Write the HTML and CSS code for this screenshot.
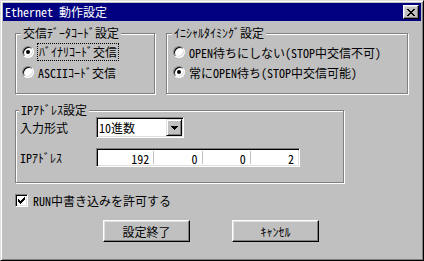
FILE: index.html
```html
<!DOCTYPE html>
<html lang="ja">
<head>
<meta charset="UTF-8" />
<title>Ethernet 動作設定</title>
<link rel="stylesheet" href="styles.css">
</head>
<body>

<div class="window">
  <div class="titlebar">
    <span class="title">Ethernet 動作設定</span>
    <span class="close">
      <svg width="8" height="7" viewBox="0 0 8 7" shape-rendering="crispEdges">
        <path d="M0 0h2v1h-2zM6 0h2v1h-2zM1 1h2v1h-2zM5 1h2v1h-2zM2 2h4v1h-4zM3 3h2v1h-2zM2 4h4v1h-4zM1 5h2v1h-2zM5 5h2v1h-2zM0 6h2v1h-2zM6 6h2v1h-2z" fill="#000"/>
      </svg>
    </span>
  </div>

  <div class="content">
    <div class="group-row">
      <fieldset class="group group-code">
        <legend>交信ﾃﾞｰﾀｺｰﾄﾞ設定</legend>
        <div class="radio-row"><span class="radio checked"></span><span class="focus">ﾊﾞｲﾅﾘｺｰﾄﾞ交信</span></div>
        <div class="radio-row"><span class="radio"></span><span class="text">ASCIIｺｰﾄﾞ交信</span></div>
      </fieldset>
      <fieldset class="group group-timing">
        <legend>ｲﾆｼｬﾙﾀｲﾐﾝｸﾞ設定</legend>
        <div class="radio-row"><span class="radio"></span><span class="text">OPEN待ちにしない(STOP中交信不可)</span></div>
        <div class="radio-row"><span class="radio checked"></span><span class="text">常にOPEN待ち(STOP中交信可能)</span></div>
      </fieldset>
    </div>

    <fieldset class="group group-ip">
      <legend>IPｱﾄﾞﾚｽ設定</legend>
      <div class="field-row">
        <span class="field-label">入力形式</span>
        <div class="combo">
          <span class="combo-value">10進数</span>
          <span class="combo-btn">
            <svg width="7" height="4" viewBox="0 0 7 4" shape-rendering="crispEdges"><path d="M0 0h7v1h-7zM1 1h5v1h-5zM2 2h3v1h-3zM3 3h1v1h-1z" fill="#000"/></svg>
          </span>
        </div>
      </div>
      <div class="field-row ip-row">
        <span class="field-label">IPｱﾄﾞﾚｽ</span>
        <div class="ip-box">
          <span class="ip-seg">192</span>
          <span class="ip-seg">0</span>
          <span class="ip-seg">0</span>
          <span class="ip-seg">2</span>
        </div>
      </div>
    </fieldset>

    <div class="check-row">
      <span class="checkbox">
        <svg width="7" height="7" viewBox="0 0 7 7" shape-rendering="crispEdges"><path d="M6 0h1v3h-1zM5 1h1v3h-1zM0 2h1v3h-1zM4 2h1v3h-1zM1 3h1v3h-1zM3 3h1v3h-1zM2 4h1v3h-1z" fill="#000"/></svg>
      </span>
      <span class="text">RUN中書き込みを許可する</span>
    </div>

    <div class="buttons">
      <span class="btn">設定終了</span>
      <span class="btn">ｷｬﾝｾﾙ</span>
    </div>
  </div>
</div>

</body>
</html>
```

FILE: styles.css
```css
html, body {
  margin: 0;
  padding: 0;
}
body {
  width: 424px;
  height: 261px;
  background: #c0c0c0;
  font-family: "Noto Sans CJK JP", "Liberation Sans", sans-serif;
  font-size: 12px;
  /* half-width latin, like the old bitmap gothic */
  font-feature-settings: "hwid" 1;
  font-kerning: none;
  color: #000;
}
.window {
  box-sizing: border-box;
  width: 424px;
  height: 261px;
  padding: 2px;
  background: #c0c0c0;
  border: 1px solid;
  border-color: #dfdfdf #000 #000 #dfdfdf;
  box-shadow: inset 1px 1px 0 #fff, inset -1px -1px 0 #808080;
}

/* title bar */
.titlebar {
  display: flex;
  align-items: center;
  height: 18px;
  padding-left: 2px;
  background: #000080;
  color: #fff;
}
.title {
  flex: 1;
  line-height: 18px;
}
.close {
  box-sizing: border-box;
  display: flex;
  align-items: center;
  justify-content: center;
  width: 16px;
  height: 14px;
  margin-right: 2px;
  background: #c0c0c0;
  border: 1px solid;
  border-color: #fff #000 #000 #fff;
  box-shadow: inset -1px -1px 0 #808080, inset 1px 1px 0 #dfdfdf;
}

.content {
  padding: 5px 0 0 12px;
}

/* group boxes */
.group-row {
  display: flex;
  gap: 11px;
}
.group {
  box-sizing: border-box;
  margin: 0;
  padding: 2px 0 11px 6px;
  border: 1px solid #808080;
  box-shadow: inset 1px 1px 0 #fff, 1px 1px 0 #fff;
}
.group legend {
  margin-left: -1px;
  padding: 0 2px;
  line-height: 14px;
  background: #c0c0c0;
}
.group-code {
  width: 140px;
}
.group-timing {
  width: 242px;
}
.radio-row {
  display: flex;
  align-items: center;
  height: 20px;
}
.radio {
  box-sizing: border-box;
  position: relative;
  width: 12px;
  height: 12px;
  margin-right: 4px;
  border-radius: 50%;
  background: #fff;
  border: 1px solid;
  border-color: #808080 #fff #fff #808080;
  box-shadow: inset 1px 1px 0 #000, inset -1px -1px 0 #dfdfdf;
}
.radio.checked::after {
  content: "";
  position: absolute;
  left: 3px;
  top: 3px;
  width: 4px;
  height: 4px;
  border-radius: 50%;
  background: #000;
}
.focus {
  padding: 1px 1px;
  line-height: 14px;
  outline: 1px dotted #000;
}

.group-ip {
  width: 329px;
  margin-top: 9px;
  padding: 0 0 15px 4px;
}
.field-row {
  display: flex;
  align-items: center;
}
.ip-row {
  margin-top: 10px;
}
.field-label {
  width: 76px;
}
.combo {
  box-sizing: border-box;
  display: flex;
  align-items: center;
  width: 88px;
  height: 21px;
  background: #fff;
  border: 1px solid;
  border-color: #808080 #fff #fff #808080;
  box-shadow: inset 1px 1px 0 #000, inset -1px -1px 0 #dfdfdf;
}
.combo-value {
  flex: 1;
  padding-left: 2px;
}
.combo-btn {
  box-sizing: border-box;
  display: flex;
  align-items: center;
  justify-content: center;
  width: 16px;
  height: 17px;
  margin-right: 1px;
  background: #c0c0c0;
  border: 1px solid;
  border-color: #dfdfdf #000 #000 #dfdfdf;
  box-shadow: inset 1px 1px 0 #fff, inset -1px -1px 0 #808080;
}
.ip-box {
  box-sizing: border-box;
  display: flex;
  width: 204px;
  height: 19px;
  padding: 2px 1px 2px 9px;
  background: #fff;
  border: 1px solid;
  border-color: #808080 #fff #fff #808080;
  box-shadow: inset 1px 1px 0 #000, inset -1px -1px 0 #dfdfdf;
}
.ip-seg {
  flex: 1;
  padding-right: 4px;
  text-align: right;
  line-height: 15px;
}
.ip-seg + .ip-seg {
  border-left: 1px solid #c0c0c0;
}

/* checkbox */
.check-row {
  display: flex;
  align-items: center;
  height: 16px;
  margin-top: 9px;
}
.checkbox {
  box-sizing: border-box;
  display: flex;
  align-items: center;
  justify-content: center;
  width: 13px;
  height: 13px;
  margin-right: 5px;
  background: #fff;
  border: 1px solid;
  border-color: #808080 #fff #fff #808080;
  box-shadow: inset 1px 1px 0 #000, inset -1px -1px 0 #dfdfdf;
}

/* push buttons */
.buttons {
  display: flex;
  gap: 42px;
  margin: 12px 0 0 88px;
}
.btn {
  box-sizing: border-box;
  display: flex;
  align-items: center;
  justify-content: center;
  width: 87px;
  height: 22px;
  background: #c0c0c0;
  border: 1px solid;
  border-color: #fff #000 #000 #fff;
  box-shadow: inset -1px -1px 0 #808080, inset 1px 1px 0 #dfdfdf;
}
```
